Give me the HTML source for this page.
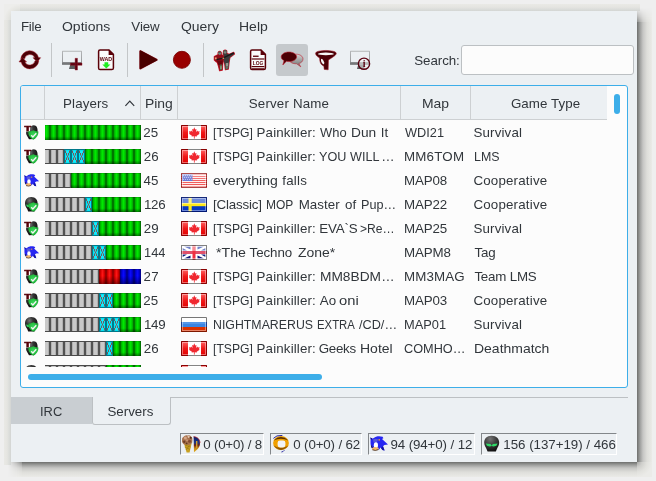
<!DOCTYPE html>
<html><head><meta charset="utf-8"><title>Doomseeker</title>
<style>
html,body{margin:0;padding:0;}
body{width:656px;height:481px;overflow:hidden;background:#efefef;position:relative;
 font-family:"Liberation Sans",sans-serif;font-size:13.33px;color:#31363b;}
.a{position:absolute;}
.t{position:absolute;white-space:pre;line-height:15px;height:15px;}
.win{left:11px;top:11px;width:626px;height:451px;background:#ecf0f3;}
.sep{width:1px;top:43px;height:34px;background:#c3c6c8;}
.hsep{width:1px;top:86px;height:33px;background:#cdd0d2;}
.sf{top:433px;height:22px;box-sizing:border-box;border:1px solid #fff;border-top-color:#83878a;border-left-color:#83878a;}
svg{position:absolute;left:0;top:0;}
</style></head>
<body>
<div class="a" style="left:637px;top:22px;width:15px;height:440px;background:linear-gradient(90deg,#6e6f6d 0,#9e9f9d 3px,#c6c6c4 6px,#dededa 10px,#e8e8e4 14px,#ebebe8 15px)"></div>
<div class="a" style="left:22px;top:462px;width:615px;height:15px;background:linear-gradient(180deg,#6e6f6d 0,#9e9f9d 3px,#c6c6c4 6px,#dededa 10px,#e8e8e4 14px,#ebebe8 15px)"></div>
<div class="a" style="left:637px;top:462px;width:15px;height:15px;background:radial-gradient(circle at 0 0,#a8a8a6 0,#cfcfcc 5px,#e2e2de 10px,#ebebe8 15px)"></div>
<div class="a" style="left:637px;top:7px;width:15px;height:15px;background:linear-gradient(90deg,#8a8b89 0,#b0b0ae 3px,#cececc 6px,#e0e0dc 10px,#e8e8e4 14px,#ebebe8 15px);-webkit-mask-image:linear-gradient(0deg,#000 0,rgba(0,0,0,.5) 6px,transparent 14px);mask-image:linear-gradient(0deg,#000 0,rgba(0,0,0,.5) 6px,transparent 14px)"></div>
<div class="a" style="left:7px;top:462px;width:15px;height:15px;background:linear-gradient(180deg,#8a8b89 0,#b0b0ae 3px,#cececc 6px,#e0e0dc 10px,#e8e8e4 14px,#ebebe8 15px);-webkit-mask-image:linear-gradient(270deg,#000 0,rgba(0,0,0,.5) 6px,transparent 14px);mask-image:linear-gradient(270deg,#000 0,rgba(0,0,0,.5) 6px,transparent 14px)"></div>
<div class="a" style="left:20px;top:4px;width:620px;height:7px;background:linear-gradient(180deg,#e9e9e5 0,#e5e5e1 3px,#dcdedb 5px,#d3d5d3 7px)"></div>
<div class="a" style="left:4px;top:20px;width:7px;height:445px;background:linear-gradient(90deg,#e9e9e5 0,#e5e5e1 3px,#dcdedb 5px,#d3d5d3 7px)"></div>
<div class="a" style="left:4px;top:4px;width:16px;height:16px;background:radial-gradient(circle at 100% 100%,#d6d8d6 0,#dcdedb 9px,#e6e6e2 12px,#ededeb 16px)"></div>
<div class="a win"></div>
<div class="a sep" style="left:51px"></div>
<div class="a sep" style="left:127px"></div>
<div class="a sep" style="left:203px"></div>
<div class="a" style="left:276px;top:44px;width:32px;height:32px;border-radius:3px;background:#c5c9cc"></div>
<div class="a" style="left:461px;top:45px;width:173px;height:30px;box-sizing:border-box;border:1px solid #bcc0c3;border-radius:3px;background:#fcfcfc"></div>
<div class="a" style="left:20px;top:85px;width:608px;height:303px;box-sizing:border-box;border:1px solid #3daee9;border-radius:3px;background:#fcfcfc"></div>
<div class="a" style="left:21px;top:86px;width:586px;height:33px;background:#ecf0f3;border-bottom:1px solid #cdd0d2;border-top-left-radius:2px"></div>
<div class="a hsep" style="left:44px"></div>
<div class="a hsep" style="left:140px"></div>
<div class="a hsep" style="left:177px"></div>
<div class="a hsep" style="left:400px"></div>
<div class="a hsep" style="left:470px"></div>
<div class="a" style="left:614px;top:94px;width:6px;height:20px;border-radius:3px;background:#3daee9"></div>
<div class="a" style="left:28px;top:374px;width:294px;height:6px;border-radius:3px;background:#3daee9"></div>
<div class="a" style="left:11px;top:397px;width:81px;height:27px;background:#c9ced2"></div>
<div class="a" style="left:170px;top:397px;width:458px;height:1px;background:#bcc0c3"></div>
<div class="a" style="left:92px;top:397px;width:79px;height:28px;box-sizing:border-box;border:1px solid #bcc0c3;border-top:none;border-radius:0 0 3px 3px"></div>
<div class="a sf" style="left:180px;width:84px"></div>
<div class="a sf" style="left:270px;width:92px"></div>
<div class="a sf" style="left:368px;width:107px"></div>
<div class="a sf" style="left:481px;width:136px"></div>
<svg width="656" height="481" viewBox="0 0 656 481" style="will-change:transform">
<defs><linearGradient id="gG" x1="0" x2="1" y1="0" y2="0"><stop offset="0" stop-color="#006c00"/><stop offset=".1" stop-color="#008000"/><stop offset=".24" stop-color="#00c800"/><stop offset=".5" stop-color="#00f200"/><stop offset=".76" stop-color="#00c800"/><stop offset=".9" stop-color="#008000"/><stop offset="1" stop-color="#006c00"/></linearGradient>
<linearGradient id="gR" x1="0" x2="1" y1="0" y2="0"><stop offset="0" stop-color="#8a0000"/><stop offset=".1" stop-color="#a00000"/><stop offset=".26" stop-color="#e40000"/><stop offset=".5" stop-color="#ff1616"/><stop offset=".74" stop-color="#e40000"/><stop offset=".9" stop-color="#a00000"/><stop offset="1" stop-color="#8a0000"/></linearGradient>
<linearGradient id="gB" x1="0" x2="1" y1="0" y2="0"><stop offset="0" stop-color="#000086"/><stop offset=".1" stop-color="#00009c"/><stop offset=".26" stop-color="#0000e0"/><stop offset=".5" stop-color="#0a0aff"/><stop offset=".74" stop-color="#0000e0"/><stop offset=".9" stop-color="#00009c"/><stop offset="1" stop-color="#000086"/></linearGradient>
<linearGradient id="gV" x1="0" x2="0" y1="0" y2="1"><stop offset="0" stop-color="#000" stop-opacity=".28"/><stop offset=".08" stop-color="#000" stop-opacity=".04"/><stop offset=".75" stop-color="#000" stop-opacity=".04"/><stop offset=".9" stop-color="#000" stop-opacity=".3"/><stop offset="1" stop-color="#000" stop-opacity=".5"/></linearGradient>
<linearGradient id="eH" x1="0" x2="1" y1="0" y2="0"><stop offset="0" stop-color="#707070"/><stop offset=".18" stop-color="#c9c9c9"/><stop offset=".82" stop-color="#c9c9c9"/><stop offset="1" stop-color="#707070"/></linearGradient>
<linearGradient id="gV2" x1="0" x2="0" y1="0" y2="1"><stop offset="0" stop-color="#000" stop-opacity=".25"/><stop offset=".1" stop-color="#000" stop-opacity=".05"/><stop offset=".45" stop-color="#000" stop-opacity="0"/><stop offset=".8" stop-color="#000" stop-opacity=".25"/><stop offset="1" stop-color="#000" stop-opacity=".45"/></linearGradient>
<g id="sG"><rect width="7" height="15" fill="url(#gG)"/><rect width="7" height="15" fill="url(#gV)"/></g>
<g id="sR"><rect width="7" height="15" fill="url(#gR)"/><rect width="7" height="15" fill="url(#gV2)"/></g>
<g id="sB"><rect width="7" height="15" fill="url(#gB)"/><rect width="7" height="15" fill="url(#gV2)"/></g>
<g id="sE"><rect width="7" height="15" fill="#4b4b4b"/><rect x=".8" y="1" width="5.4" height="13" fill="url(#eH)"/></g>
<g id="sC"><rect width="7" height="15" fill="#00788a"/><rect x="1" y="1" width="5" height="13" fill="#00e4f4"/><rect x="2" y="2" width="3" height="11" fill="#20f0ff" fill-opacity=".6"/><g fill="#8a4444" fill-opacity=".9"><rect x="1" y="1.5" width="1" height="2.5"/><rect x="5" y="1.5" width="1" height="2.5"/><rect x="2" y="4" width="1" height="2.5"/><rect x="4" y="4" width="1" height="2.5"/><rect x="3" y="6.5" width="1" height="2"/><rect x="2" y="8.5" width="1" height="2.5"/><rect x="4" y="8.5" width="1" height="2.5"/><rect x="1" y="11" width="1" height="2.5"/><rect x="5" y="11" width="1" height="2.5"/></g></g>

<linearGradient id="rV" x1="0" x2="0" y1="0" y2="1"><stop offset="0" stop-color="#ff6a6a"/><stop offset=".5" stop-color="#f01818"/><stop offset="1" stop-color="#e00000"/></linearGradient>
<linearGradient id="wV" x1="0" x2="0" y1="0" y2="1"><stop offset="0" stop-color="#fff" stop-opacity=".45"/><stop offset=".5" stop-color="#fff" stop-opacity=".1"/><stop offset="1" stop-color="#fff" stop-opacity="0"/></linearGradient>
<g id="fca"><rect width="26" height="15" fill="#fff"/><rect width="7" height="15" fill="url(#rV)"/><rect x="20" width="6" height="15" fill="url(#rV)"/>
<path d="M13.3 2.2L14.2 4.5L15.5 3.9L15 6.9L16.5 5.6L16.9 6.5L18.7 6.2L18 8.3L18.7 8.8L15.7 10.7L16 11.6L13.7 11.3L13.7 14L12.9 14L12.9 11.3L10.6 11.6L10.9 10.7L7.9 8.8L8.6 8.3L7.9 6.2L9.7 6.5L10.1 5.6L11.6 6.9L11.1 3.9L12.4 4.5Z" fill="#f02830"/>
<rect x=".5" y=".5" width="25" height="14" fill="none" stroke="#777" stroke-opacity=".9"/><path d="M7 .5L.5 .5L.5 14.5L7 14.5M20 .5L25.5 .5L25.5 14.5L20 14.5" fill="none" stroke="#8c0000"/><rect x="1.5" y="1.5" width="23" height="12" fill="none" stroke="#fff" stroke-opacity=".4"/></g>

<g id="fus"><rect width="26" height="15" fill="#fff"/>
<g fill="#f05050"><rect y="1" width="26" height="1.1"/><rect y="3" width="26" height="1.1"/><rect y="5" width="26" height="1.1"/><rect y="7" width="26" height="1.1"/><rect y="9" width="26" height="1.1"/><rect y="11" width="26" height="1.1"/><rect y="13" width="26" height="1.1"/></g>
<rect x="1" y="1" width="10.5" height="7" fill="#5a68d0"/>
<g fill="#fff" fill-opacity=".7"><circle cx="2.5" cy="2.5" r=".5"/><circle cx="4.5" cy="2.5" r=".5"/><circle cx="6.5" cy="2.5" r=".5"/><circle cx="8.5" cy="2.5" r=".5"/><circle cx="10.3" cy="2.5" r=".5"/><circle cx="3.5" cy="4.5" r=".5"/><circle cx="5.5" cy="4.5" r=".5"/><circle cx="7.5" cy="4.5" r=".5"/><circle cx="9.5" cy="4.5" r=".5"/><circle cx="2.5" cy="6.5" r=".5"/><circle cx="4.5" cy="6.5" r=".5"/><circle cx="6.5" cy="6.5" r=".5"/><circle cx="8.5" cy="6.5" r=".5"/><circle cx="10.3" cy="6.5" r=".5"/></g>
<rect width="26" height="15" fill="url(#wV)"/>
<rect x=".5" y=".5" width="25" height="14" fill="none" stroke="#800" stroke-opacity=".7"/><rect x="1.5" y="1.5" width="23" height="12" fill="none" stroke="#fff" stroke-opacity=".45"/></g>

<g id="fse"><rect width="26" height="15" fill="#0838c0"/><rect x="7.5" width="3.2" height="15" fill="#ffe81a"/><rect y="6" width="26" height="3.2" fill="#ffe81a"/>
<rect width="26" height="7" fill="#fff" fill-opacity=".42"/>
<rect x=".5" y=".5" width="25" height="14" fill="none" stroke="#001060" stroke-opacity=".8"/><rect x="1.5" y="1.5" width="23" height="12" fill="none" stroke="#fff" stroke-opacity=".4"/></g>

<g id="fgb"><rect width="26" height="15" fill="#fff"/>
<path d="M3 1.5L9.5 1.5L9.5 4.6ZM1.5 3L1.5 5.5L6 5.5ZM16.5 1.5L23 1.5L16.5 4.6ZM24.5 3L24.5 5.5L20 5.5Z" fill="#7080c8"/>
<path d="M3 13.5L9.5 13.5L9.5 10.4ZM1.5 12L1.5 9.5L6 9.5ZM16.5 13.5L23 13.5L16.5 10.4ZM24.5 12L24.5 9.5L20 9.5Z" fill="#101878"/>
<rect y="6" width="26" height="3" fill="#e0506a"/><rect x="11.5" width="3" height="15" fill="#f03040"/><rect x="11.5" width="3" height="6" fill="#fff" fill-opacity=".45"/>
<rect x=".5" y=".5" width="25" height="14" fill="none" stroke="#333" stroke-opacity=".62"/><rect x="1.5" y="1.5" width="23" height="12" fill="none" stroke="#fff" stroke-opacity=".4"/></g>

<g id="fru"><rect width="26" height="15" fill="#fff"/><rect y="5" width="26" height="5" fill="#3a86e4"/><rect y="5" width="26" height="2" fill="#fff" fill-opacity=".15"/><rect y="10" width="26" height="5" fill="#dc3200"/>
<path d="M.5 5L.5 .5L25.5 .5L25.5 5" fill="none" stroke="#777"/><path d="M.5 5L.5 10M25.5 5L25.5 10" stroke="#1a3c90" fill="none"/><path d="M.5 10L.5 14.5L25.5 14.5L25.5 10" fill="none" stroke="#801800"/>
<rect x="1.5" y="1.5" width="23" height="12" fill="none" stroke="#fff" stroke-opacity=".4"/></g>

<radialGradient id="hG" cx=".35" cy=".25" r=".8"><stop offset="0" stop-color="#767676"/><stop offset=".35" stop-color="#343434"/><stop offset="1" stop-color="#080808"/></radialGradient>
<radialGradient id="shG" cx=".5" cy=".45" r=".6"><stop offset="0" stop-color="#3ad85a"/><stop offset=".7" stop-color="#22b83c"/><stop offset="1" stop-color="#129024"/></radialGradient>
<g id="shield"><path d="M4.2 6.6Q6.8 6.6 9.3 5.2Q11.8 6.6 14.4 6.6Q14.6 12.2 9.3 14.8Q4 12.2 4.2 6.6Z" fill="url(#shG)"/><path d="M7.2 10.2L8.9 12L12.3 8.3" fill="none" stroke="#f4f4f4" stroke-width="1.4"/></g>
<g id="helm"><path d="M7.2 0C11.8 0 13.6 3 13.6 6.4C13.6 9 12.2 10.4 11.7 12L10.6 14.6L4.2 14.6L3.2 12C2.4 10.4 1 9 1 6.4C1 3 2.8 0 7.2 0Z" fill="url(#hG)"/></g>
<g id="iH"><use href="#helm"/><path d="M2 7.6L6.4 8.2L7.3 9.6L8.2 8.2L12.6 7.6L11.6 9.8L9 10.2L7.3 9.9L5.6 10.2L3 9.8Z" fill="#2fd060"/><use href="#shield"/></g>
<g id="iT"><path d="M9.8 .2C12.6 .2 13.8 3 13.6 6C13.4 8.5 12 10 11.6 11.6L10.6 14L5 14.2L3.4 11.6C2.4 10 1.8 8.6 2.2 6.6L6 6.4L6 3C6.6 1.2 8 .2 9.8 .2Z" fill="url(#hG)"/><text x=".6" y="6.4" font-family="Liberation Sans,sans-serif" font-weight="bold" font-size="7.8" fill="#560008" stroke="#560008" stroke-width=".7" textLength="6.2" lengthAdjust="spacingAndGlyphs">T</text><use href="#shield"/></g>

<g id="sonic"><path d="M.3 1.6L2.4 2.6L4 2C5.5 .4 9 -.3 12.6 .8L13.4 2.2L12 3L18 8.6L14.4 9L13 10.2L14.6 14.6L12.4 14L10.6 11.6L9.2 13.4L3 13.6L1.2 11.6L.6 8C.4 5.6 .8 3.4 .3 1.6Z" fill="#2626f2"/>
<path d="M3 3.4Q5.4 2 8 3.2L7 6.4L3.6 6.6Z" fill="#5858d8"/><path d="M.3 1.6L2 2.4L1.4 4Z" fill="#0a0a50"/>
<ellipse cx="5.9" cy="9.2" rx="2.1" ry="2.9" fill="#fff"/><ellipse cx="5.4" cy="12.6" rx="3.4" ry="1.7" fill="#f4b868"/><path d="M2.4 13.8Q5.4 15.2 8.4 13.6" stroke="#402008" stroke-width=".8" fill="none"/><path d="M1.6 9.6Q1.4 11.2 2.6 12" stroke="#202020" stroke-width=".9" fill="none"/>
<rect x="8.6" y="3" width="1.2" height="1.6" fill="#f0a030"/><path d="M11 12L12.4 14L14.6 14.6L13 10.2Z" fill="#1414a0"/></g>
<g id="iS"><use href="#sonic" transform="translate(0,1) scale(.84)"/></g>

<clipPath id="vp"><rect x="21" y="120" width="586" height="247"/></clipPath>
<clipPath id="pc"><rect x="45" y="120" width="96" height="247"/></clipPath>
</defs>
<g clip-path="url(#vp)">
<use href="#iT" x="24" y="125"/>
<use href="#fca" x="181" y="125"/>
<use href="#iT" x="24" y="149"/>
<use href="#fca" x="181" y="149"/>
<use href="#iS" x="24" y="173"/>
<use href="#fus" x="181" y="173"/>
<use href="#iH" x="24" y="197"/>
<use href="#fse" x="181" y="197"/>
<use href="#iT" x="24" y="221"/>
<use href="#fca" x="181" y="221"/>
<use href="#iS" x="24" y="245"/>
<use href="#fgb" x="181" y="245"/>
<use href="#iT" x="24" y="269"/>
<use href="#fca" x="181" y="269"/>
<use href="#iT" x="24" y="293"/>
<use href="#fca" x="181" y="293"/>
<use href="#iH" x="24" y="317"/>
<use href="#fru" x="181" y="317"/>
<use href="#iT" x="24" y="341"/>
<use href="#fca" x="181" y="341"/>
<use href="#iH" x="24" y="365"/>
<use href="#fca" x="181" y="365"/>
</g>
<g clip-path="url(#pc)">
<use href="#sG" x="43" y="125"/>
<use href="#sG" x="50" y="125"/>
<use href="#sG" x="57" y="125"/>
<use href="#sG" x="64" y="125"/>
<use href="#sG" x="71" y="125"/>
<use href="#sG" x="78" y="125"/>
<use href="#sG" x="85" y="125"/>
<use href="#sG" x="92" y="125"/>
<use href="#sG" x="99" y="125"/>
<use href="#sG" x="106" y="125"/>
<use href="#sG" x="113" y="125"/>
<use href="#sG" x="120" y="125"/>
<use href="#sG" x="127" y="125"/>
<use href="#sG" x="134" y="125"/>
<use href="#sE" x="43" y="149"/>
<use href="#sE" x="50" y="149"/>
<use href="#sE" x="57" y="149"/>
<use href="#sC" x="64" y="149"/>
<use href="#sC" x="71" y="149"/>
<use href="#sC" x="78" y="149"/>
<use href="#sG" x="85" y="149"/>
<use href="#sG" x="92" y="149"/>
<use href="#sG" x="99" y="149"/>
<use href="#sG" x="106" y="149"/>
<use href="#sG" x="113" y="149"/>
<use href="#sG" x="120" y="149"/>
<use href="#sG" x="127" y="149"/>
<use href="#sG" x="134" y="149"/>
<use href="#sE" x="43" y="173"/>
<use href="#sE" x="50" y="173"/>
<use href="#sE" x="57" y="173"/>
<use href="#sE" x="64" y="173"/>
<use href="#sG" x="71" y="173"/>
<use href="#sG" x="78" y="173"/>
<use href="#sG" x="85" y="173"/>
<use href="#sG" x="92" y="173"/>
<use href="#sG" x="99" y="173"/>
<use href="#sG" x="106" y="173"/>
<use href="#sG" x="113" y="173"/>
<use href="#sG" x="120" y="173"/>
<use href="#sG" x="127" y="173"/>
<use href="#sG" x="134" y="173"/>
<use href="#sE" x="43" y="197"/>
<use href="#sE" x="50" y="197"/>
<use href="#sE" x="57" y="197"/>
<use href="#sE" x="64" y="197"/>
<use href="#sE" x="71" y="197"/>
<use href="#sE" x="78" y="197"/>
<use href="#sC" x="85" y="197"/>
<use href="#sG" x="92" y="197"/>
<use href="#sG" x="99" y="197"/>
<use href="#sG" x="106" y="197"/>
<use href="#sG" x="113" y="197"/>
<use href="#sG" x="120" y="197"/>
<use href="#sG" x="127" y="197"/>
<use href="#sG" x="134" y="197"/>
<use href="#sE" x="43" y="221"/>
<use href="#sE" x="50" y="221"/>
<use href="#sE" x="57" y="221"/>
<use href="#sE" x="64" y="221"/>
<use href="#sE" x="71" y="221"/>
<use href="#sE" x="78" y="221"/>
<use href="#sE" x="85" y="221"/>
<use href="#sC" x="92" y="221"/>
<use href="#sG" x="99" y="221"/>
<use href="#sG" x="106" y="221"/>
<use href="#sG" x="113" y="221"/>
<use href="#sG" x="120" y="221"/>
<use href="#sG" x="127" y="221"/>
<use href="#sG" x="134" y="221"/>
<use href="#sE" x="43" y="245"/>
<use href="#sE" x="50" y="245"/>
<use href="#sE" x="57" y="245"/>
<use href="#sE" x="64" y="245"/>
<use href="#sE" x="71" y="245"/>
<use href="#sE" x="78" y="245"/>
<use href="#sE" x="85" y="245"/>
<use href="#sC" x="92" y="245"/>
<use href="#sC" x="99" y="245"/>
<use href="#sG" x="106" y="245"/>
<use href="#sG" x="113" y="245"/>
<use href="#sG" x="120" y="245"/>
<use href="#sG" x="127" y="245"/>
<use href="#sG" x="134" y="245"/>
<use href="#sE" x="43" y="269"/>
<use href="#sE" x="50" y="269"/>
<use href="#sE" x="57" y="269"/>
<use href="#sE" x="64" y="269"/>
<use href="#sE" x="71" y="269"/>
<use href="#sE" x="78" y="269"/>
<use href="#sE" x="85" y="269"/>
<use href="#sE" x="92" y="269"/>
<use href="#sR" x="99" y="269"/>
<use href="#sR" x="106" y="269"/>
<use href="#sR" x="113" y="269"/>
<use href="#sB" x="120" y="269"/>
<use href="#sB" x="127" y="269"/>
<use href="#sB" x="134" y="269"/>
<use href="#sE" x="43" y="293"/>
<use href="#sE" x="50" y="293"/>
<use href="#sE" x="57" y="293"/>
<use href="#sE" x="64" y="293"/>
<use href="#sE" x="71" y="293"/>
<use href="#sE" x="78" y="293"/>
<use href="#sE" x="85" y="293"/>
<use href="#sE" x="92" y="293"/>
<use href="#sC" x="99" y="293"/>
<use href="#sC" x="106" y="293"/>
<use href="#sG" x="113" y="293"/>
<use href="#sG" x="120" y="293"/>
<use href="#sG" x="127" y="293"/>
<use href="#sG" x="134" y="293"/>
<use href="#sE" x="43" y="317"/>
<use href="#sE" x="50" y="317"/>
<use href="#sE" x="57" y="317"/>
<use href="#sE" x="64" y="317"/>
<use href="#sE" x="71" y="317"/>
<use href="#sE" x="78" y="317"/>
<use href="#sE" x="85" y="317"/>
<use href="#sE" x="92" y="317"/>
<use href="#sC" x="99" y="317"/>
<use href="#sC" x="106" y="317"/>
<use href="#sC" x="113" y="317"/>
<use href="#sG" x="120" y="317"/>
<use href="#sG" x="127" y="317"/>
<use href="#sG" x="134" y="317"/>
<use href="#sE" x="43" y="341"/>
<use href="#sE" x="50" y="341"/>
<use href="#sE" x="57" y="341"/>
<use href="#sE" x="64" y="341"/>
<use href="#sE" x="71" y="341"/>
<use href="#sE" x="78" y="341"/>
<use href="#sE" x="85" y="341"/>
<use href="#sE" x="92" y="341"/>
<use href="#sE" x="99" y="341"/>
<use href="#sC" x="106" y="341"/>
<use href="#sG" x="113" y="341"/>
<use href="#sG" x="120" y="341"/>
<use href="#sG" x="127" y="341"/>
<use href="#sG" x="134" y="341"/>
<use href="#sE" x="43" y="365"/>
<use href="#sE" x="50" y="365"/>
<use href="#sE" x="57" y="365"/>
<use href="#sE" x="64" y="365"/>
<use href="#sE" x="71" y="365"/>
<use href="#sE" x="78" y="365"/>
<use href="#sE" x="85" y="365"/>
<use href="#sE" x="92" y="365"/>
<use href="#sE" x="99" y="365"/>
<use href="#sG" x="106" y="365"/>
<use href="#sG" x="113" y="365"/>
<use href="#sG" x="120" y="365"/>
<use href="#sG" x="127" y="365"/>
<use href="#sG" x="134" y="365"/>
</g>
<!-- refresh -->
<g transform="translate(29.8,59.8)" fill="#4c0006" stroke="#a01828" stroke-width=".5">
<path d="M-9 -1A9 9 0 0 1 8.7 -2.2L10.8 -2.1L7.5 2.3L3.2 -2.1L4.9 -2A5.3 5.3 0 0 0 -5.2 -1Z"/>
<path d="M9 1A9 9 0 0 1 -8.7 2.2L-10.8 2.1L-7.5 -2.3L-3.2 2.1L-4.9 2A5.3 5.3 0 0 0 5.2 1Z"/>
</g>
<!-- monitor + -->
<linearGradient id="mF" x1="0" x2="0" y1="0" y2="1"><stop offset="0" stop-color="#b4b6b8"/><stop offset=".75" stop-color="#9a9c9e"/><stop offset=".82" stop-color="#8a8c8e"/><stop offset="1" stop-color="#5e6062"/></linearGradient>
<g id="mon"><path d="M62 51.4Q62 50.8 62.6 50.8L81.4 50.8Q82 50.8 82 51.4L82 64.2Q82 64.8 81.4 64.8L62.6 64.8Q62 64.8 62 64.2ZM63 51.8L63 62L81 62L81 51.8Z" fill="url(#mF)" fill-rule="evenodd"/><path d="M70.2 64.8L75.8 64.8L76.8 69L69 69Z" fill="#5a5c5e"/></g>
<path d="M70.4 63L82 63L82 65.3L70.4 65.3ZM75.1 58.3L77.5 58.3L77.5 70L75.1 70Z" fill="#5a0010" stroke="#9a1828" stroke-width=".4"/>
<!-- WAD doc -->
<g id="doc"><path d="M100 50L109 50L113.4 54.4L113.4 68Q113.4 69.6 111.8 69.6L100 69.6Q98.6 69.6 98.6 68L98.6 51.6Q98.6 50 100 50Z" fill="#fbfbfb" stroke="#5a0008" stroke-width="1.5"/><path d="M108.6 49.6L114 55L108.6 55Z" fill="#5a0008"/></g>
<text x="105.9" y="60.7" font-family="Liberation Sans,sans-serif" font-weight="bold" font-size="6.2" text-anchor="middle" fill="#5a0008" textLength="12.4" lengthAdjust="spacingAndGlyphs">WAD</text>
<path d="M104.5 62.2L108.2 62.2L108.2 64.4L110.4 64.4L106.35 68.4L102.3 64.4L104.5 64.4Z" fill="#22ee22"/>
<!-- play -->
<path d="M140.4 51.2L156.6 59.8L140.4 68.4Z" fill="#4a0000" stroke="#4a0000" stroke-width="1.6" stroke-linejoin="round"/>
<path d="M140.4 51.2L156.6 59.8L140.4 68.4Z" fill="none" stroke="#b02030" stroke-opacity=".5" stroke-width="2.4" stroke-linejoin="round"/>
<path d="M140.4 51.2L156.6 59.8L140.4 68.4Z" fill="#4a0000" stroke="#4a0000" stroke-width="1.4" stroke-linejoin="round"/>
<!-- record -->
<circle cx="181.9" cy="59.8" r="8.5" fill="#980000" stroke="#7c0000" stroke-width=".9"/>
<!-- marines -->
<g stroke="#cc1c2c" stroke-width="1.3" stroke-linejoin="round" fill="#cc1c2c"><path d="M218.2 52.4Q219.7 50.6 221.2 52.4L221.3 54.8L223.6 55.8L224 59.6L222.8 61L222.6 64L222.3 70L219.6 70.6L218.6 66.4L217.4 62.6L216 61.4L214.4 60L214.4 56.6L217 55.2L218 54.8Z"/><path d="M223.6 51Q225.1 49.2 226.7 51L226.8 53.4L229.2 54.4L233.8 52.4L234.4 54L229.8 57.6L229 62.4L228.3 69L225.4 69.6L224.8 64.2L223.6 61L224 56.2L223.2 54Z"/></g>
<path d="M218.2 52.4Q219.7 50.6 221.2 52.4L221.3 54.8L223.6 55.8L224 59.6L222.8 61L222.6 64L222.3 70L219.6 70.6L218.6 66.4L217.4 62.6L216 61.4L214.4 60L214.4 56.6L217 55.2L218 54.8Z" fill="#900c18"/><path d="M217 60.6L222.8 60.6L222.4 65L218.4 65Z" fill="#68040c"/>
<path d="M223.6 51Q225.1 49.2 226.7 51L226.8 53.4L229.2 54.4L233.8 52.4L234.4 54L229.8 57.6L229 62.4L228.3 69L225.4 69.6L224.8 64.2L223.6 61L224 56.2L223.2 54Z" fill="#3a3a3a"/>
<ellipse cx="219.7" cy="53.3" rx="1.5" ry="1.7" fill="#76857a"/><ellipse cx="225.1" cy="52" rx="1.5" ry="1.7" fill="#7c887e"/>
<path d="M218.4 52.2L221 52.2M223.8 50.9L226.4 50.9" stroke="#3c443c" stroke-width=".8"/>
<path d="M216.4 59.6L222.4 58.4L229 55.2L233.8 53" stroke="#181818" stroke-width="1.4" fill="none"/>
<rect x="214.9" y="57.4" width="1.7" height="1.9" fill="#eea274"/><rect x="222.6" y="57.6" width="1.5" height="1.4" fill="#d88c5c"/>
<path d="M219.8 64.4L222.2 64.4L222 69.6L220 70.2Z" fill="#566448"/><path d="M225.4 63.4L228.6 62.4L228.1 68.6L225.8 69.2Z" fill="#687060"/>
<rect x="220.5" y="66.2" width=".9" height="2.8" fill="#b4bc9c"/><rect x="226.5" y="63" width="1.1" height="3" fill="#b8b8b0"/>
<!-- LOG doc -->
<use href="#doc" x="152"/>
<g fill="#5a0008"><rect x="253" y="55.6" width="5.6" height="1.3"/><rect x="251.6" y="58.4" width="12.8" height="1.2"/><rect x="251.6" y="66" width="12.8" height="1.2"/><rect x="251.6" y="68" width="12.8" height=".7"/></g>
<text x="258" y="64.9" font-family="Liberation Sans,sans-serif" font-weight="bold" font-size="5.2" text-anchor="middle" fill="#5a0008" textLength="10.6" lengthAdjust="spacingAndGlyphs">LOG</text>
<!-- chat -->
<linearGradient id="cG" x1="0" x2="0" y1="0" y2="1"><stop offset="0" stop-color="#d4d4d4"/><stop offset="1" stop-color="#6c6e6c"/></linearGradient>
<path d="M296 54.2C300 54.2 303 56.2 303 59C303 61.4 301 63 298.8 63.6L300.8 66.8L296.6 63.8C291.6 63.8 289 61.6 289 59C289 56.2 292 54.2 296 54.2Z" fill="url(#cG)" stroke="#c02030" stroke-width=".6"/>
<path d="M288.9 52C293.2 52 296.6 54.2 296.6 56.8C296.6 59.4 293.2 61.6 288.9 61.6C288 61.6 287.2 61.5 286.4 61.3L282.8 65L284 60.6C282.2 59.8 281.2 58.4 281.2 56.8C281.2 54.2 284.6 52 288.9 52Z" fill="#4c0004" stroke="#c02030" stroke-width=".6"/>
<!-- funnel -->
<path d="M315.5 53.3C315.5 49.5 336.3 49.5 336.3 53.3C336.3 55 334 56.4 328.5 60L328.2 69.8L324.2 69.4L323.8 66C320.4 64.4 319.8 62.4 319.6 58C317 56.6 315.5 55 315.5 53.3Z" fill="#4c0006" stroke="#a01828" stroke-width=".5"/>
<ellipse cx="325.9" cy="53.9" rx="8" ry="1.35" fill="#f6f6f6"/><path d="M321 58.8L322.8 59.4L324.3 62.4L324 64.6L322 63.2L321 61Z" fill="#f4f4f4"/>
<!-- monitor info -->
<use href="#mon" x="288"/>
<circle cx="364" cy="63.7" r="5.6" fill="#eff0f1" fill-opacity=".55" stroke="#5a0010" stroke-width="1.4"/>
<text x="364.2" y="67" font-family="Liberation Serif,serif" font-weight="bold" font-size="10" text-anchor="middle" fill="#5a0010">i</text>
<!-- sort arrow -->
<path d="M125.4 105.8L129.8 101.2L134.2 105.8" fill="none" stroke="#31363b" stroke-width="1.2"/>

<!-- status icons -->
<g><path d="M184 443.4L191.6 443.4L189.6 452.4L186.6 452.6Z" fill="#c8a020"/><path d="M185 445L190.6 447M184.6 447L190 449.4M186 450L189.6 445" stroke="#8a6a10" stroke-width=".5"/>
<path d="M182 440.4Q181.6 437.6 183.6 436.8Q185 434.8 187.4 435.4Q190 434.6 191 436.6Q192.8 437.8 192.4 440.6Q192.8 443 190.6 444.2Q188.6 445.4 186.4 444.6Q183.6 445.2 182.6 443Q181.6 441.8 182 440.4Z" fill="#a8724c"/><circle cx="185.4" cy="438" r="1.5" fill="#d4a688"/><circle cx="189.6" cy="441.2" r="1.5" fill="#80482e"/><circle cx="188.6" cy="436.8" r="1.1" fill="#e2c6b0"/><circle cx="184.2" cy="441.8" r="1.2" fill="#6c3c26"/><circle cx="190.8" cy="437.8" r="1" fill="#54301c"/><circle cx="187" cy="440.2" r="1" fill="#c89878"/><circle cx="186.6" cy="443.4" r=".9" fill="#5c3a20"/>
<linearGradient id="dG" x1="0" x2="0" y1="0" y2="1"><stop offset="0" stop-color="#0c1860"/><stop offset=".4" stop-color="#203888"/><stop offset=".55" stop-color="#702010"/><stop offset=".75" stop-color="#c88818"/><stop offset="1" stop-color="#e0b020"/></linearGradient>
<path d="M193.6 436.6C197.6 437 200 439.6 200 443C200 447 198 449 194 452.2Z" fill="url(#dG)"/><path d="M193.6 436.6C197.6 437 200 439.6 200 443" stroke="#c02020" stroke-width=".7" fill="none"/><rect x="196" y="441" width="1.4" height="7" fill="#d0a030"/></g>
<g><ellipse cx="281" cy="443" rx="7.9" ry="7" fill="#f0a000"/><path d="M273.6 440.4Q281 433.6 288.4 440.4Q281 437 273.6 440.4Z" fill="#5a3000"/><path d="M274 446.4Q281 452.6 288 446.4Q281 453.4 274 446.4Z" fill="#5a3000"/><path d="M273.4 445.6Q281 453.4 288.6 445.6Q281 450 273.4 445.6Z" fill="#6a3800" fill-opacity=".7"/>
<rect x="277.6" y="440.4" width="7.8" height="7" rx="2.4" fill="#f2f3f4"/>
<path d="M273.4 438.4Q276 435 282.4 435.4" stroke="#2828a0" stroke-width="1" fill="none"/><path d="M284.4 450.2Q283.4 451.8 281.4 452" stroke="#2828a0" stroke-width=".9" fill="none"/></g>
<use href="#sonic" x="370" y="436"/>
<radialGradient id="hG2" cx=".4" cy=".2" r=".85"><stop offset="0" stop-color="#767676"/><stop offset=".45" stop-color="#404040"/><stop offset="1" stop-color="#0a0a0a"/></radialGradient>
<g transform="translate(484,435.8)"><path d="M7.6 0C12.6 0 15.2 3.2 15.2 7C15.2 9.8 13.6 11.2 13 13L11.8 15.8L3.6 15.8L2.4 13C1.8 11.2 .2 9.8 .2 7C.2 3.2 2.6 0 7.6 0Z" fill="url(#hG2)"/><path d="M1.8 7.6L6.6 8.2L7.7 10L8.8 8.2L13.6 7.6L12.4 10L9.6 10.6L7.7 10.2L5.8 10.6L3 10Z" fill="#30d868"/></g>

</svg>
<div class="a" style="left:0;top:0;width:656px;height:481px;will-change:transform">
<div class="t" style="left:20.90px;top:19px;letter-spacing:-0.200px">File</div>
<div class="t" style="left:61.85px;top:19px;transform:scaleX(1.0489);transform-origin:0 0">Options</div>
<div class="t" style="left:131.30px;top:19px;letter-spacing:-0.067px">View</div>
<div class="t" style="left:180.75px;top:19px;transform:scaleX(1.0457);transform-origin:0 0">Query</div>
<div class="t" style="left:238.85px;top:19px;transform:scaleX(1.0500);transform-origin:0 0">Help</div>
<div class="t" style="left:414.20px;top:53px;letter-spacing:-0.050px">Search:</div>
<div class="t" style="left:63.10px;top:96px;letter-spacing:0.100px">Players</div>
<div class="t" style="left:145.36px;top:96px;transform:scaleX(1.0440);transform-origin:0 0">Ping</div>
<div class="t" style="left:248.80px;top:96px;letter-spacing:0.160px">Server Name</div>
<div class="t" style="left:421.96px;top:96px;transform:scaleX(1.0440);transform-origin:0 0">Map</div>
<div class="t" style="left:510.90px;top:96px;letter-spacing:0.088px">Game Type</div>
<div class="t" style="left:143.20px;top:125px;letter-spacing:0.200px">25</div>
<div class="t" style="left:213.09px;top:125px;transform:scaleX(0.9143);transform-origin:0 0">[TSPG]</div>
<div class="t" style="left:256.60px;top:125px;letter-spacing:0.140px">Painkiller:</div>
<div class="t" style="left:319.80px;top:125px;transform:scaleX(0.9704);transform-origin:0 0">Who</div>
<div class="t" style="left:350.77px;top:125px;transform:scaleX(1.0304);transform-origin:0 0">Dun</div>
<div class="t" style="left:380.75px;top:125px;letter-spacing:0.000px">It</div>
<div class="t" style="left:404.60px;top:125px;transform:scaleX(0.9575);transform-origin:0 0">WDI21</div>
<div class="t" style="left:473.40px;top:125px;letter-spacing:0.171px">Survival</div>
<div class="t" style="left:143.75px;top:149px;letter-spacing:0.200px">26</div>
<div class="t" style="left:213.09px;top:149px;transform:scaleX(0.9143);transform-origin:0 0">[TSPG]</div>
<div class="t" style="left:256.60px;top:149px;letter-spacing:0.140px">Painkiller:</div>
<div class="t" style="left:318.85px;top:149px;transform:scaleX(0.9481);transform-origin:0 0">YOU</div>
<div class="t" style="left:350.00px;top:149px;transform:scaleX(0.9452);transform-origin:0 0">WILL</div>
<div class="t" style="left:381.25px;top:149px;letter-spacing:0.000px">…</div>
<div class="t" style="left:404.00px;top:149px;letter-spacing:0.200px">MM6TOM</div>
<div class="t" style="left:473.97px;top:149px;transform:scaleX(0.9308);transform-origin:0 0">LMS</div>
<div class="t" style="left:143.50px;top:173px;letter-spacing:0.200px">45</div>
<div class="t" style="left:212.75px;top:173px;transform:scaleX(1.0533);transform-origin:0 0">everything</div>
<div class="t" style="left:282.30px;top:173px;letter-spacing:0.200px">falls</div>
<div class="t" style="left:404.00px;top:173px;letter-spacing:-0.150px">MAP08</div>
<div class="t" style="left:473.40px;top:173px;letter-spacing:0.190px">Cooperative</div>
<div class="t" style="left:144.00px;top:197px;letter-spacing:-0.300px">126</div>
<div class="t" style="left:213.00px;top:197px;letter-spacing:-0.188px">[Classic]</div>
<div class="t" style="left:266.20px;top:197px;transform:scaleX(0.9000);transform-origin:0 0">MOP</div>
<div class="t" style="left:298.70px;top:197px;letter-spacing:0.060px">Master</div>
<div class="t" style="left:345.00px;top:197px;letter-spacing:0.000px">of</div>
<div class="t" style="left:360.85px;top:197px;transform:scaleX(0.9471);transform-origin:0 0">Pup…</div>
<div class="t" style="left:404.00px;top:197px;letter-spacing:-0.150px">MAP22</div>
<div class="t" style="left:473.40px;top:197px;letter-spacing:0.190px">Cooperative</div>
<div class="t" style="left:143.70px;top:221px;letter-spacing:0.200px">29</div>
<div class="t" style="left:213.09px;top:221px;transform:scaleX(0.9143);transform-origin:0 0">[TSPG]</div>
<div class="t" style="left:256.60px;top:221px;letter-spacing:0.140px">Painkiller:</div>
<div class="t" style="left:319.20px;top:221px;letter-spacing:-0.125px">EVA`S</div>
<div class="t" style="left:360.39px;top:221px;transform:scaleX(0.9086);transform-origin:0 0">&gt;Re…</div>
<div class="t" style="left:404.00px;top:221px;letter-spacing:-0.150px">MAP25</div>
<div class="t" style="left:473.40px;top:221px;letter-spacing:0.171px">Survival</div>
<div class="t" style="left:144.24px;top:245px;transform:scaleX(0.9619);transform-origin:0 0">144</div>
<div class="t" style="left:215.83px;top:245px;transform:scaleX(1.0667);transform-origin:0 0">*The</div>
<div class="t" style="left:249.60px;top:245px;letter-spacing:-0.080px">Techno</div>
<div class="t" style="left:297.80px;top:245px;transform:scaleX(1.0486);transform-origin:0 0">Zone*</div>
<div class="t" style="left:404.00px;top:245px;letter-spacing:-0.150px">MAPM8</div>
<div class="t" style="left:474.40px;top:245px;letter-spacing:-0.150px">Tag</div>
<div class="t" style="left:143.60px;top:269px;letter-spacing:0.200px">27</div>
<div class="t" style="left:213.09px;top:269px;transform:scaleX(0.9143);transform-origin:0 0">[TSPG]</div>
<div class="t" style="left:256.60px;top:269px;letter-spacing:0.140px">Painkiller:</div>
<div class="t" style="left:319.57px;top:269px;transform:scaleX(1.0298);transform-origin:0 0">MM8BDM</div>
<div class="t" style="left:381.25px;top:269px;letter-spacing:0.000px">…</div>
<div class="t" style="left:404.00px;top:269px;letter-spacing:0.140px">MM3MAG</div>
<div class="t" style="left:474.40px;top:269px;letter-spacing:-0.200px">Team LMS</div>
<div class="t" style="left:143.20px;top:293px;letter-spacing:0.200px">25</div>
<div class="t" style="left:213.09px;top:293px;transform:scaleX(0.9143);transform-origin:0 0">[TSPG]</div>
<div class="t" style="left:256.60px;top:293px;letter-spacing:0.140px">Painkiller:</div>
<div class="t" style="left:319.80px;top:293px;letter-spacing:0.000px">Ao</div>
<div class="t" style="left:338.79px;top:293px;transform:scaleX(1.1063);transform-origin:0 0">oni</div>
<div class="t" style="left:404.00px;top:293px;letter-spacing:-0.150px">MAP03</div>
<div class="t" style="left:473.40px;top:293px;letter-spacing:0.190px">Cooperative</div>
<div class="t" style="left:144.00px;top:317px;letter-spacing:-0.300px">149</div>
<div class="t" style="left:213.07px;top:317px;transform:scaleX(0.9252);transform-origin:0 0">NIGHTMARERUS</div>
<div class="t" style="left:317.15px;top:317px;transform:scaleX(0.8512);transform-origin:0 0">EXTRA</div>
<div class="t" style="left:359.10px;top:317px;transform:scaleX(0.9526);transform-origin:0 0">/CD/…</div>
<div class="t" style="left:404.04px;top:317px;transform:scaleX(0.9619);transform-origin:0 0">MAP01</div>
<div class="t" style="left:473.40px;top:317px;letter-spacing:0.171px">Survival</div>
<div class="t" style="left:143.75px;top:341px;letter-spacing:0.200px">26</div>
<div class="t" style="left:213.09px;top:341px;transform:scaleX(0.9143);transform-origin:0 0">[TSPG]</div>
<div class="t" style="left:256.60px;top:341px;letter-spacing:0.140px">Painkiller:</div>
<div class="t" style="left:318.80px;top:341px;letter-spacing:-0.300px">Geeks</div>
<div class="t" style="left:359.65px;top:341px;transform:scaleX(1.0500);transform-origin:0 0">Hotel</div>
<div class="t" style="left:403.65px;top:341px;transform:scaleX(0.9532);transform-origin:0 0">COMHO…</div>
<div class="t" style="left:473.85px;top:341px;transform:scaleX(1.0486);transform-origin:0 0">Deathmatch</div>
<div class="t" style="left:39.73px;top:404px;transform:scaleX(0.9667);transform-origin:0 0">IRC</div>
<div class="t" style="left:107.50px;top:404px;letter-spacing:-0.017px">Servers</div>
<div class="t" style="left:203.30px;top:437px;letter-spacing:-0.230px">0 (0+0) / 8</div>
<div class="t" style="left:293.30px;top:437px;letter-spacing:-0.145px">0 (0+0) / 62</div>
<div class="t" style="left:390.50px;top:437px;letter-spacing:-0.115px">94 (94+0) / 12</div>
<div class="t" style="left:503.30px;top:437px;letter-spacing:-0.024px">156 (137+19) / 466</div>
</div>
</body></html>
